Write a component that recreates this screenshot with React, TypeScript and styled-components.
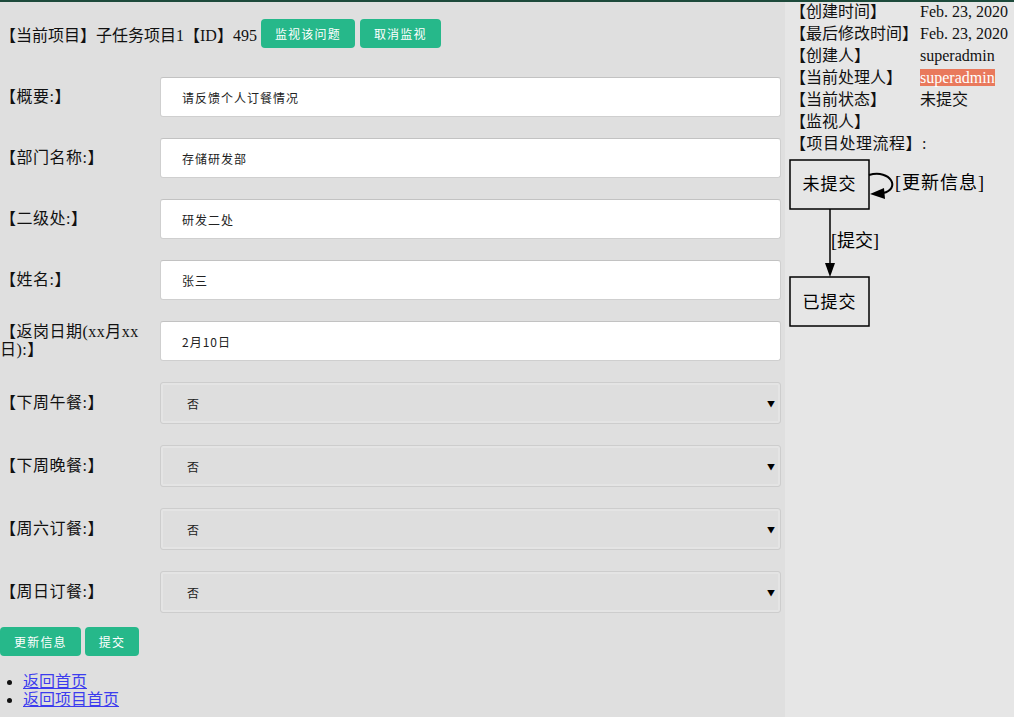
import { createGlobalStyle } from 'styled-components';
import styled from 'styled-components';

const GlobalStyle = createGlobalStyle`
  html, body {
    margin: 0;
    padding: 0;
    background: #e6e6e6;
  }
  body {
    font-family: 'Liberation Serif', 'Noto Sans CJK SC', serif;
    font-size: 16px;
    color: #111;
  }
`;

const FONT = `'Liberation Serif', 'Noto Sans CJK SC', serif`;

const Page = styled.div`
  display: flex;
  min-height: 100vh;
  border-top: 2px solid #1d4a3b;
  box-sizing: border-box;
`;

const Main = styled.div`
  width: 785px;
  flex: none;
  background: #dfdfdf;
  padding-top: 17px;
  box-sizing: border-box;
`;

const Sidebar = styled.div`
  flex: 1;
  background: #e6e6e6;
  padding-left: 5px;
`;

const Header = styled.div`
  display: flex;
  align-items: center;
  height: 29px;
  gap: 5px;
`;

const HeaderText = styled.span`
  margin-right: -1px;
`;

const Button = styled.button`
  height: 29px;
  padding: 0 14px;
  border: none;
  border-radius: 4px;
  background: #26b88a;
  color: #fff;
  font-family: ${FONT};
  font-size: 12px;
  letter-spacing: 1.2px;
  cursor: pointer;
`;

const Form = styled.div`
  display: grid;
  grid-template-columns: 160px 621px;
  row-gap: 21px;
  margin-top: 29px;
  align-items: center;
`;

const Label = styled.div`
  padding-right: 12px;
  line-height: 18px;
  letter-spacing: 0.5px;
`;

const Input = styled.div`
  height: 40px;
  box-sizing: border-box;
  background: #fff;
  border: 1px solid #cfcfcf;
  border-top-color: #c2c2c2;
  border-radius: 3px;
  padding-left: 21px;
  display: flex;
  align-items: center;
  font-family: 'Noto Sans CJK SC', sans-serif;
  font-size: 12px;
  letter-spacing: 1px;
  color: #222;
`;

const Select = styled.div`
  height: 42px;
  box-sizing: border-box;
  background: #dedede;
  border: 1px solid #cdcdcd;
  border-radius: 3px;
  box-shadow: inset 0 0 0 2px #e4e4e4;
  padding: 0 5px 0 26px;
  display: flex;
  align-items: center;
  justify-content: space-between;
  font-family: 'Noto Sans CJK SC', sans-serif;
  font-size: 12px;
  color: #222;
`;

const Caret = styled.span`
  font-size: 8px;
  color: #000;
`;

const Actions = styled.div`
  display: flex;
  gap: 4px;
  margin-top: 14px;
`;

const Links = styled.ul`
  margin: 17px 0 0;
  padding: 0 0 0 23px;
  line-height: 18px;
`;

const Link = styled.a`
  color: #3c3cee;
  text-decoration: underline;
`;

const InfoTable = styled.div`
  display: grid;
  grid-template-columns: 130px auto;
  grid-auto-rows: 22px;
  align-items: baseline;
  margin-top: -1px;
  line-height: 22px;
`;

const Highlight = styled.span`
  background: #e9795c;
  color: #fff;
`;

const FlowTitle = styled.div`
  height: 22px;
  line-height: 22px;
  letter-spacing: 0.5px;
`;

const Diagram = styled.svg`
  display: block;
  margin-left: -5px;
  margin-top: -4px;
`;

const fields = [
  { label: '【概要:】', value: '请反馈个人订餐情况' },
  { label: '【部门名称:】', value: '存储研发部' },
  { label: '【二级处:】', value: '研发二处' },
  { label: '【姓名:】', value: '张三' },
  { label: '【返岗日期(xx月xx日):】', value: '2月10日' },
];

const selects = ['【下周午餐:】', '【下周晚餐:】', '【周六订餐:】', '【周日订餐:】'];

const info: [string, React.ReactNode][] = [
  ['【创建时间】', 'Feb. 23, 2020'],
  ['【最后修改时间】', 'Feb. 23, 2020'],
  ['【创建人】', 'superadmin'],
  ['【当前处理人】', <Highlight>superadmin</Highlight>],
  ['【当前状态】', '未提交'],
  ['【监视人】', ''],
];

export default function App() {
  return (
    <>
      <GlobalStyle />
      <Page>
        <Main>
          <Header>
            <HeaderText>【当前项目】子任务项目1【ID】495</HeaderText>
            <Button>监视该问题</Button>
            <Button>取消监视</Button>
          </Header>

          <Form>
            {fields.map(f => (
              <>
                <Label key={f.label}>{f.label}</Label>
                <Input>{f.value}</Input>
              </>
            ))}
            {selects.map(s => (
              <>
                <Label key={s}>{s}</Label>
                <Select>
                  <span>否</span>
                  <Caret>▼</Caret>
                </Select>
              </>
            ))}
          </Form>

          <Actions>
            <Button>更新信息</Button>
            <Button>提交</Button>
          </Actions>

          <Links>
            <li><Link href="#">返回首页</Link></li>
            <li><Link href="#">返回项目首页</Link></li>
          </Links>
        </Main>

        <Sidebar>
          <InfoTable>
            {info.map(([k, v]) => (
              <>
                <span key={k}>{k}</span>
                <span>{v}</span>
              </>
            ))}
          </InfoTable>
          <FlowTitle>【项目处理流程】:</FlowTitle>
          <Diagram width="210" height="180" viewBox="0 0 210 180">
            <g fontFamily={FONT} fontSize="17" fill="#000">
              <rect x="5" y="9" width="79" height="49" fill="none" stroke="#000" strokeWidth="1.5" />
              <text x="44.5" y="39" textAnchor="middle" letterSpacing="1">未提交</text>
              <path d="M84 24 C106 18 116 38 98 42" fill="none" stroke="#000" strokeWidth="2" />
              <polygon points="85,43 99,37 100,48" />
              <text x="110" y="38" fontSize="18" letterSpacing="1">[更新信息]</text>

              <line x1="45" y1="58" x2="45" y2="113" stroke="#000" strokeWidth="1.5" />
              <polygon points="40,112 50,112 45,126" />
              <text x="46" y="96" fontSize="18">[提交]</text>

              <rect x="5" y="126" width="79" height="49" fill="none" stroke="#000" strokeWidth="1.5" />
              <text x="44.5" y="157" textAnchor="middle" letterSpacing="1">已提交</text>
            </g>
          </Diagram>
        </Sidebar>
      </Page>
    </>
  );
}
